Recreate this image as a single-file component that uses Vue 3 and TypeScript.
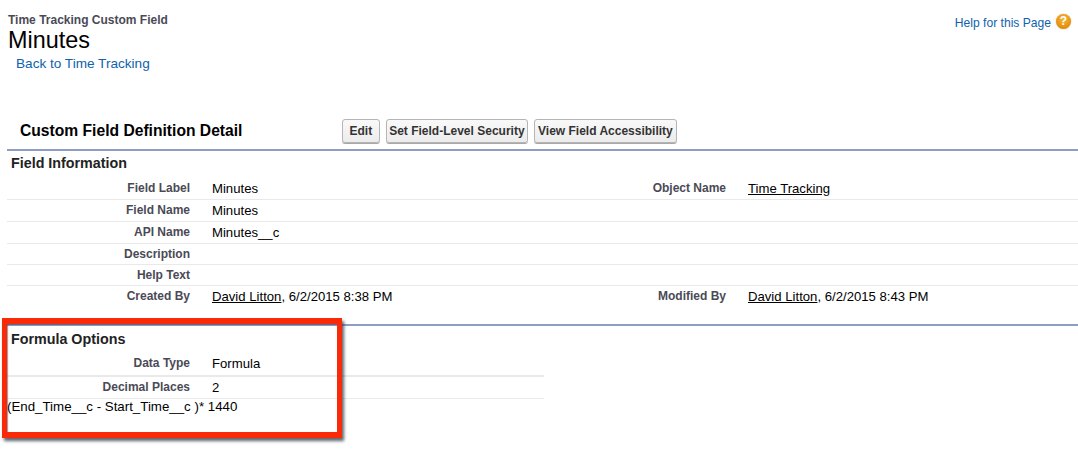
<script setup lang="ts">
interface Row { label: string; value?: string; link?: string; suffix?: string; label2?: string; link2?: string; suffix2?: string }
const rows: Row[] = [
  { label: 'Field Label', value: 'Minutes', label2: 'Object Name', link2: 'Time Tracking' },
  { label: 'Field Name', value: 'Minutes' },
  { label: 'API Name', value: 'Minutes__c' },
  { label: 'Description' },
  { label: 'Help Text' },
  { label: 'Created By', link: 'David Litton', suffix: ', 6/2/2015 8:38 PM', label2: 'Modified By', link2: 'David Litton', suffix2: ', 6/2/2015 8:43 PM' },
]
const buttons = ['Edit', 'Set Field-Level Security', 'View Field Accessibility']
</script>

<template>
  <div class="page">
    <header class="head">
      <div class="titles">
        <div class="kicker">Time Tracking Custom Field</div>
        <h1 class="title">Minutes</h1>
        <a class="back">Back to Time Tracking</a>
      </div>
      <div class="help">
        <a class="help-link">Help for this Page</a>
        <span class="help-icon">?</span>
      </div>
    </header>

    <section class="detail">
      <div class="toolbar">
        <h2 class="detail-title">Custom Field Definition Detail</h2>
        <div class="buttons">
          <button v-for="b in buttons" :key="b" class="btn" type="button">{{ b }}</button>
        </div>
      </div>

      <h3 class="section-title first">Field Information</h3>
      <div class="rows">
        <div v-for="r in rows" :key="r.label" class="row">
          <div class="label">{{ r.label }}</div>
          <div class="value"><a v-if="r.link" class="ul">{{ r.link }}</a>{{ r.suffix }}{{ r.value }}</div>
          <div class="label">{{ r.label2 }}</div>
          <div class="value"><a v-if="r.link2" class="ul">{{ r.link2 }}</a>{{ r.suffix2 }}</div>
        </div>
      </div>

      <div class="formula">
        <h3 class="section-title">Formula Options</h3>
        <div class="short">
          <div class="row thick">
            <div class="label">Data Type</div>
            <div class="value">Formula</div>
          </div>
          <div class="row tall">
            <div class="label">Decimal Places</div>
            <div class="value">2</div>
          </div>
        </div>
        <div class="expr">(End_Time__c - Start_Time__c )* 1440</div>
        <div class="callout"></div>
      </div>
    </section>
  </div>
</template>

<style>
html, body { margin: 0; background: #fff; }
</style>

<style scoped>
.page {
  width: 1078px;
  height: 464px;
  overflow: hidden;
  position: relative;
  font-family: "Liberation Sans", Arial, sans-serif;
  color: #000;
  background: #fff;
}
.head {
  display: flex;
  justify-content: space-between;
  padding: 13px 7px 0 8px;
  height: 105px;
  box-sizing: border-box;
}
.kicker {
  font-size: 12px;
  font-weight: 700;
  line-height: 14px;
  color: #4a4a56;
}
.title {
  margin: 0;
  font-size: 23.4px;
  font-weight: 400;
  line-height: 27px;
}
.back {
  display: block;
  margin: 2px 0 0 8px;
  font-size: 13.6px;
  line-height: 16px;
  color: #0f62ae;
}
.help {
  display: flex;
  align-items: flex-start;
  gap: 5px;
}
.help-link {
  font-size: 12.1px;
  line-height: 14px;
  margin-top: 3px;
  color: #0f62ae;
}
.help-icon {
  width: 15px;
  height: 15px;
  margin-top: 1px;
  border-radius: 50%;
  background: radial-gradient(circle at 50% 35%, #f6b73c 0%, #e8930f 60%, #c9780a 100%);
  color: #fff;
  font-size: 12px;
  font-weight: 700;
  line-height: 15px;
  text-align: center;
  box-shadow: 0 0 1px #a3670a;
}
.toolbar {
  display: flex;
  align-items: flex-end;
  height: 46px;
  margin-left: 7px;
  padding-bottom: 6px;
  box-sizing: border-box;
  border-bottom: 2px solid #8e9dc4;
}
.detail-title {
  margin: 0 0 3px;
  width: 322px;
  padding-left: 13px;
  font-size: 15.65px;
  font-weight: 700;
  line-height: 18px;
}
.buttons {
  display: flex;
  gap: 6px;
}
.btn {
  height: 24px;
  padding: 0 3px;
  border: 1px solid #b5b5b5;
  border-radius: 3px;
  background: linear-gradient(#f9f9f9, #ececec);
  box-shadow: 0 1px 0 #a8a8a8;
  font-family: inherit;
  font-size: 12px;
  font-weight: 700;
  color: #333;
}
.btn:nth-child(1) { padding: 0 6.5px; }
.btn:nth-child(2) { padding: 0 2.5px; }
.section-title {
  margin: 0;
  padding-left: 11px;
  font-size: 14.3px;
  font-weight: 700;
  line-height: 18px;
  color: #222;
}
.first { padding-top: 3px; }
.rows {
  margin-left: 7px;
  height: 154px;
  border-bottom: 2px solid #8e9dc4;
  box-sizing: border-box;
  padding-top: 6px;
}
.row {
  display: grid;
  grid-template-columns: 183px 390px 102px 1fr;
  column-gap: 22px;
  height: 22px;
  line-height: 20px;
  box-sizing: border-box;
  border-bottom: 1px solid #e9e9ea;
}
.rows .row:nth-child(n+4) { height: 21px; }
.rows .row:last-child { border-bottom: 0; }
.label {
  text-align: right;
  font-size: 12px;
  font-weight: 700;
  color: #4a4a56;
}
.value {
  font-size: 13.15px;
  white-space: nowrap;
  line-height: 21px;
}
.ul { text-decoration: underline; }
.formula { position: relative; padding-top: 4px; }
.short { width: 537px; margin-left: 7px; margin-top: 4px; }
.short .row { grid-template-columns: 183px 1fr; }
.short .thick { height: 25px; border-bottom: 2px solid #e9e9ea; padding-top: 1px; }
.short .tall { height: 22px; border-bottom: 1px solid #e9e9ea; }
.expr {
  padding-left: 7px;
  font-size: 13.3px;
  line-height: 16px;
}
.callout {
  position: absolute;
  left: 2px;
  top: -8px;
  width: 340px;
  height: 120px;
  box-sizing: border-box;
  border-style: solid;
  border-color: #fa2a08;
  border-width: 6px 5px;
  box-shadow: 2px 3px 3px rgba(40, 50, 60, 0.75), inset 1px 1px 1px rgba(40, 50, 60, 0.5);
  pointer-events: none;
}
</style>
